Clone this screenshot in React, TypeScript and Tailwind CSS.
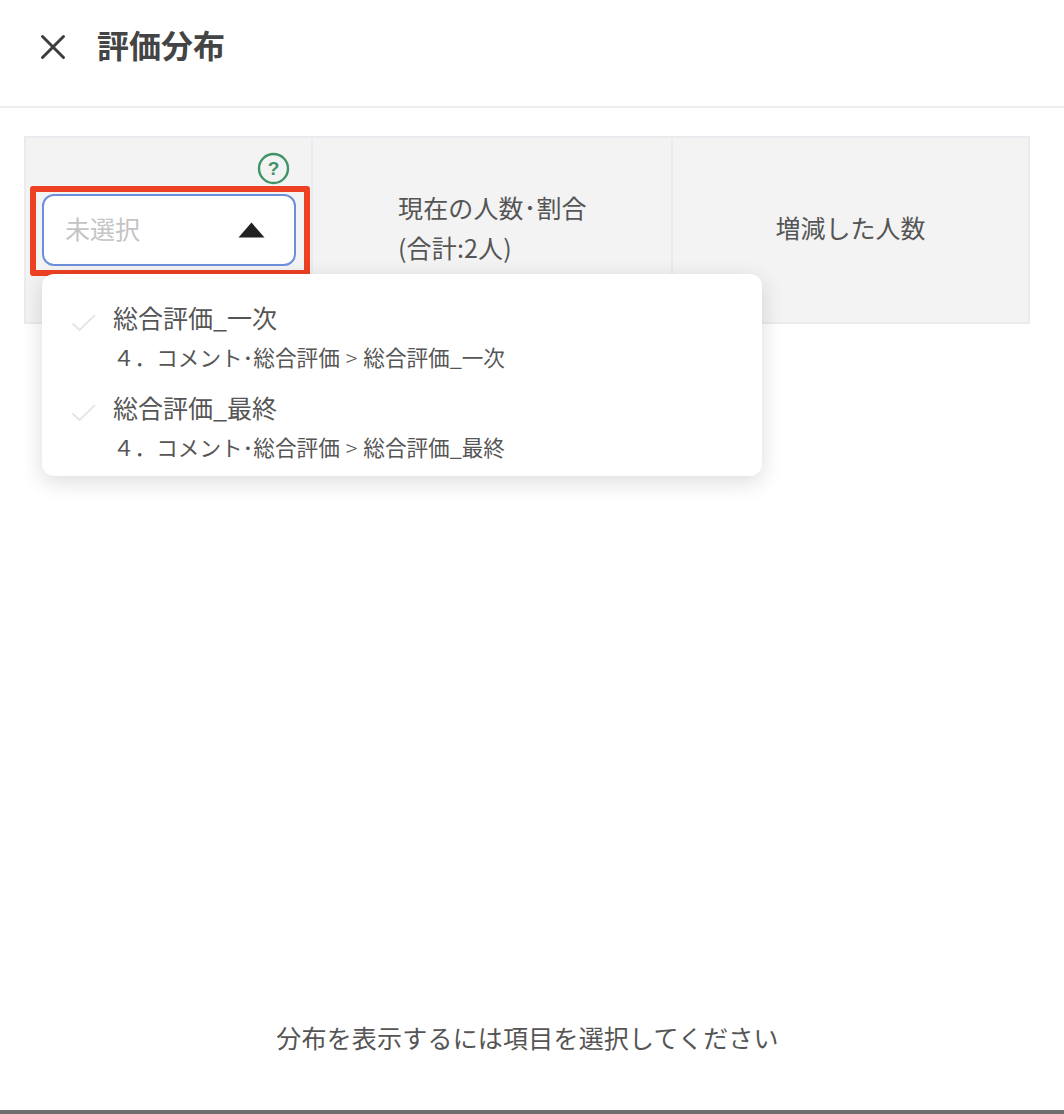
import React from 'react';
import { X } from 'lucide-react';

const options = [
  { label: '総合評価_一次', path: '４．コメント･総合評価', leaf: '総合評価_一次' },
  { label: '総合評価_最終', path: '４．コメント･総合評価', leaf: '総合評価_最終' },
];

const CheckMark: React.FC = () => (
  <svg width="26" height="20" viewBox="0 0 26 20" fill="none" className="mt-[12px] shrink-0">
    <path d="M1.5 10.5 L8.5 17 L24 2" stroke="#e4e4ea" strokeWidth="1.8" />
  </svg>
);

const HelpIcon: React.FC = () => (
  <svg width="33" height="33" viewBox="0 0 33 33" fill="none">
    <circle cx="16.5" cy="16.5" r="14.5" stroke="#3f9467" strokeWidth="2.4" />
    <text x="16.5" y="23" textAnchor="middle" fontSize="19" fontWeight="700" fill="#3f9467" fontFamily="'Liberation Sans', sans-serif">?</text>
  </svg>
);

const App: React.FC = () => {
  return (
    <div className="relative h-[1114px] w-[1064px] overflow-hidden bg-white text-[25px] text-[#555555] font-['Noto_Sans_CJK_JP','Noto_Sans',sans-serif]">
      <header className="flex h-[108px] items-center gap-[23px] border-b-2 border-[#ededf0] pb-[18px] pl-[32px]">
        <X size={42} strokeWidth={1.7} className="mt-[6px] text-[#3d3d3d]" />
        <h1 className="text-[32px] leading-none font-bold text-[#444444]">評価分布</h1>
      </header>

      <div className="mx-[24px] mt-[28px] flex h-[188px] w-[1006px] border-2 border-[#ebebef] bg-[#f3f3f3]">
        <div className="relative w-[287px] shrink-0 border-r-2 border-[#ebebef] pt-[14px] pl-[16px]">
          <div className="flex justify-end pr-[21px]">
            <HelpIcon />
          </div>
          <div className="mt-[9px] flex h-[72px] w-[254px] items-center justify-between rounded-[12px] border-2 border-[#6c8fdc] bg-white pr-[29px] pb-[2px] pl-[21px]">
            <span className="text-[#c4c4c4]">未選択</span>
            <svg width="27" height="16" viewBox="0 0 27 16" className="mt-[2px]">
              <path d="M13.5 0.5 L26.5 15.5 H0.5 Z" fill="#222222" />
            </svg>
          </div>
        </div>
        <div className="flex w-[360px] shrink-0 items-center border-r-2 border-[#ebebef] pb-[6px] pl-[85px] leading-[40px] tracking-[0.15px]">
          <div>
            現在の人数･割合
            <br />
            (合計:2人)
          </div>
        </div>
        <div className="flex flex-1 items-center justify-center pb-[4px]">増減した人数</div>
      </div>

      {/* annotation round the select */}
      <div className="absolute top-[186px] left-[30px] h-[90px] w-[280px] rounded-[3px] border-[6px] border-[#ee4023]" />

      {/* dropdown menu */}
      <div className="absolute top-[274px] left-[42px] h-[202px] w-[720px] rounded-[12px] bg-white pt-[27px] pl-[29px] shadow-[0_6px_22px_rgba(0,0,0,0.14)]">
        {options.map((o) => (
          <div key={o.label} className="mb-[15px] flex gap-[16px]">
            <CheckMark />
            <div className="-mt-[3px]">
              <div className="text-[25px] leading-[39px]">{o.label}</div>
              <div className="flex text-[21.6px] leading-[39px] whitespace-nowrap">
                <span>{o.path}</span>
                <span className="mx-[6px] font-light">&gt;</span>
                <span>{o.leaf}</span>
              </div>
            </div>
          </div>
        ))}
      </div>

      <p className="absolute top-[1017px] left-0 w-full pr-[9px] text-center leading-[40px] tracking-[0.2px]">
        分布を表示するには項目を選択してください
      </p>
      <div className="absolute bottom-0 left-0 h-[4px] w-full bg-[#6e6e6e]" />
    </div>
  );
};

export default App;
